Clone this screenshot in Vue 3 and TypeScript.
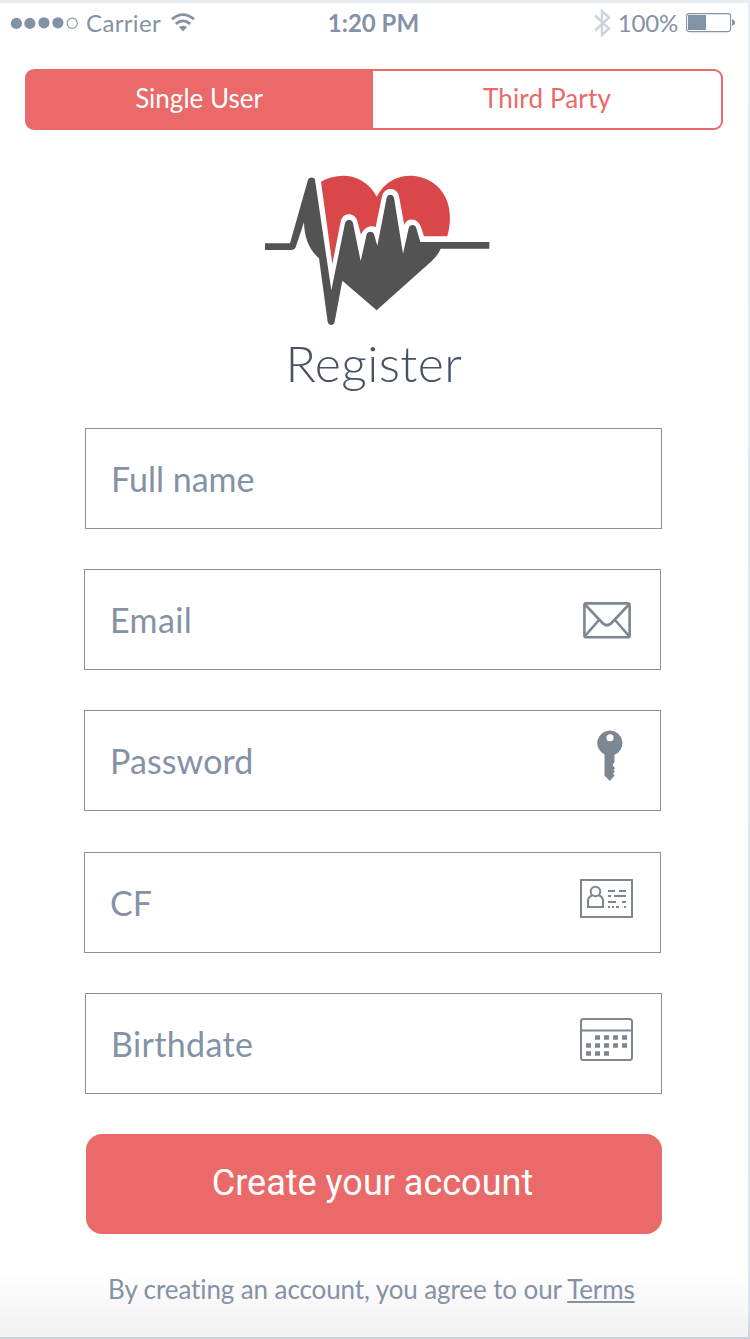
<script setup lang="ts">
import { ref } from 'vue'

interface Field {
  id: string
  label: string
  icon?: 'mail' | 'key' | 'card' | 'calendar'
}

const tabs: string[] = ['Single User', 'Third Party']
const activeTab = ref<number>(0)

const fields: Field[] = [
  { id: 'name', label: 'Full name' },
  { id: 'email', label: 'Email', icon: 'mail' },
  { id: 'password', label: 'Password', icon: 'key' },
  { id: 'cf', label: 'CF', icon: 'card' },
  { id: 'birth', label: 'Birthdate', icon: 'calendar' },
]
</script>

<template>
  <div class="backdrop">
    <main class="screen">
      <header class="status">
        <div class="status-left">
          <svg class="signal" width="68" height="12" viewBox="0 0 68 12">
            <circle cx="5.4" cy="6.4" r="5.6" />
            <circle cx="18.9" cy="6.4" r="5.6" />
            <circle cx="32.9" cy="5.8" r="5.6" />
            <circle cx="46.9" cy="5.8" r="5.6" />
            <circle class="empty" cx="61.2" cy="6.2" r="5.1" />
          </svg>
          <span class="carrier">Carrier</span>
          <svg class="wifi" width="24" height="19" viewBox="0 0 24 19">
            <path d="M1 6.2Q12 -3 23 6.2" />
            <path d="M4.8 10.8Q12 5 19.2 10.8" />
            <path class="solid" d="M8 14Q12 11.4 16 14L12 18.6Z" />
          </svg>
        </div>
        <span class="clock">1:20 PM</span>
        <div class="status-right">
          <svg class="bluetooth" width="17" height="28" viewBox="0 0 17 28">
            <path d="M1 6.5L15 19.5L8 26V2L15 8.5L1 21.5" />
          </svg>
          <span class="percent">100%</span>
          <svg class="battery" width="50" height="20" viewBox="0 0 50 20">
            <rect class="shell" x="0.6" y="0.6" width="44" height="18" rx="2.5" />
            <rect x="2" y="2" width="18" height="15" />
            <path d="M46 6.2Q49 7 49 9.5T46 12.8Z" />
          </svg>
        </div>
      </header>

      <nav class="tabs">
        <button
          v-for="(tab, i) in tabs"
          :key="tab"
          type="button"
          class="tab"
          :class="{ active: i === activeTab }"
          @click="activeTab = i"
        >{{ tab }}</button>
      </nav>

      <svg class="logo" width="245" height="170" viewBox="0 0 735 510">
        <path
          class="heart"
          d="M198 50C258 16 332 30 365 95C402 24 480 18 532 52C580 84 596 144 577 214H507L499 190C491 158 456 156 448 180L432 94C426 65 388 65 381 94L362 186C347 180 328 186 318 209L307 168C300 140 262 141 257 170L232 297Z"
        />
        <path
          class="pulse"
          d="M30 235H105L159 44C163 35 177 35 180 44L229 376L270 175C274 161 291 161 294 175L317 288L335 208C339 198 353 198 357 208L367 242L395 98C398 86 414 86 417 98L444 266L461 190C465 177 480 177 484 190L496 231H703V251H557C549 272 530 290 500 315L365 436L262 347L239 470C236 483 221 483 218 470L192 280C160 252 148 215 147 172L122 247Q119 255 110 255H30Z"
        />
      </svg>

      <h1 class="title">Register</h1>

      <form class="form" @submit.prevent>
        <div v-for="f in fields" :key="f.id" class="field" :class="f.id">
          <span class="label">{{ f.label }}</span>
          <svg v-if="f.icon === 'mail'" class="icon" width="48" height="37" viewBox="0 0 48 37">
            <rect x="1.4" y="1.4" width="45.2" height="33.8" rx="1.8" />
            <path d="M2 2.5L19.5 21Q24 25.5 28.5 21L46 2.5M2 34L16 18M46 34L32 18" />
          </svg>
          <svg v-else-if="f.icon === 'key'" class="icon key" width="26" height="52" viewBox="0 0 26 52">
            <path
              fill-rule="evenodd"
              d="M13 0.5A12.6 12.6 0 0 1 17.5 24.8V32L16 34V36L18 38L16.5 40L18 41.5L16 43.5L17.5 45.5L13 51L7.5 45.5V24.5A12.6 12.6 0 0 1 13 0.5ZM13 4.2A3.5 3.5 0 1 0 13 11.2A3.5 3.5 0 1 0 13 4.2Z"
            />
          </svg>
          <svg v-else-if="f.icon === 'card'" class="icon" width="53" height="39" viewBox="0 0 53 39">
            <rect class="thin" x="1" y="1" width="51" height="37" />
            <circle class="thin" cx="15.5" cy="12.5" r="4.8" />
            <path
              class="thin"
              d="M12 16.5Q8 18 8 22V28H23V22Q23 18 19 16.5M28 12H35M39 12H46M28 17H31M34 17H46M28 23H36M42 23H46M28 28H30M32 28H34M36 28H39M44 28H46"
            />
          </svg>
          <svg v-else-if="f.icon === 'calendar'" class="icon" width="53" height="43" viewBox="0 0 53 43">
            <rect class="thin" x="1" y="1" width="51" height="41" rx="2.5" />
            <path class="thin" d="M1 12.5H52" />
            <path
              class="days"
              d="M15 19.5H20M24 19.5H29M33 19.5H38M42 19.5H47M6 27.5H11M15 27.5H20M24 27.5H29M33 27.5H38M42 27.5H47M6 35.5H11M15 35.5H20M24 35.5H29"
            />
          </svg>
        </div>
        <button class="submit" type="submit">Create your account</button>
      </form>

      <footer class="legal">
        <p>By creating an account, you agree to our <a>Terms</a></p>
      </footer>
    </main>
  </div>
</template>

<style>
body {
  margin: 0;
}
</style>

<style scoped>
.backdrop {
  box-sizing: border-box;
  width: 750px;
  height: 1339px;
  padding: 3px 2px 2px 0;
  overflow: hidden;
  background: linear-gradient(#e9eef4, #dfe4ed 98%, #cbd1dc 99.8%);
  font-family: Lato, 'Liberation Sans', sans-serif;
  font-variant-ligatures: none;
  color: #8492a6;
}
.screen {
  display: flex;
  flex-direction: column;
  height: 1334px;
  background: #fff;
}
.status {
  display: grid;
  grid-template-columns: 1fr auto 1fr;
  align-items: center;
  height: 39px;
  padding: 0 12px 0 11px;
  font-size: 24px;
  line-height: 38px;
  white-space: nowrap;
}
.status-left,
.status-right {
  display: flex;
  align-items: center;
}
.status-right {
  justify-content: flex-end;
}
.signal,
.battery,
.wifi {
  fill: #8492a6;
}
.empty,
.shell {
  fill: none;
  stroke: #8492a6;
  stroke-width: 1.1;
}
.carrier {
  margin: 0 10px 0 7px;
  letter-spacing: 0.35px;
}
.wifi path {
  fill: none;
  stroke: #8492a6;
  stroke-width: 2.8;
}
.wifi .solid {
  fill: #8492a6;
  stroke: none;
}
.clock {
  font-weight: 700;
}
.bluetooth {
  margin-right: 7px;
  fill: none;
  stroke: #ced3da;
  stroke-width: 2.4;
}
.percent {
  margin-right: 8px;
  letter-spacing: -0.2px;
}
.tabs {
  display: grid;
  grid-template-columns: 348px 350px;
  width: 698px;
  height: 61px;
  margin: 27px 0 0 25px;
}
.tab {
  box-sizing: border-box;
  padding: 0 0 3px;
  border: 2px solid #e96a68;
  background: #fff;
  color: #e96a68;
  font: 26px/54px Lato, sans-serif;
}
.tab:first-child {
  border-radius: 9px 0 0 9px;
}
.tab:last-child {
  border-left: 0;
  border-radius: 0 9px 9px 0;
  letter-spacing: 0.15px;
}
.tab.active {
  background: #e96a68;
  color: #fff;
}
.logo {
  margin: 35px 0 0 255px;
}
.title {
  margin: -2px 0 0;
  height: 95px;
  font-size: 50px;
  font-weight: 300;
  line-height: 60px;
  letter-spacing: 0.4px;
  text-align: center;
  color: #475364;
}
.heart {
  fill: #da4749;
}
.pulse {
  fill: #535353;
}
.form {
  display: flex;
  flex-direction: column;
  gap: 40px;
  width: 577px;
  margin-left: 84px;
}
.field {
  display: flex;
  box-sizing: border-box;
  align-items: center;
  justify-content: space-between;
  width: 577px;
  height: 101px;
  padding: 0 27px 0 25px;
  border: 1px solid #8492a6;
}
.name,
.birth {
  margin-left: 1px;
}
.birth {
  padding-right: 28px;
  letter-spacing: 0.35px;
}
.cf {
  margin-top: 1px;
}
.email {
  padding-right: 29px;
  letter-spacing: 0.4px;
}
.email .icon {
  margin-top: 2px;
}
.password {
  padding-right: 37px;
  letter-spacing: 0.1px;
}
.password .icon {
  margin-bottom: 10px;
}
.cf .icon,
.birth .icon {
  margin-bottom: 8px;
}
.label {
  padding-top: 1px;
  font-size: 34px;
  line-height: 42px;
}
.icon {
  fill: none;
  stroke: #7c8791;
  stroke-width: 2.6;
}
.icon.key {
  fill: #7c8791;
  stroke: none;
}
.icon .thin {
  stroke-width: 2;
}
.icon .days {
  stroke-width: 4.5;
}
.submit {
  width: 576px;
  height: 100px;
  margin-left: 2px;
  padding: 0 3px 2px 0;
  border: 0;
  border-radius: 16px;
  background: #e96a68;
  color: #fff;
  font: 36px/42px Roboto, sans-serif;
}
.legal {
  flex: 1;
  margin-top: 38px;
  background: linear-gradient(#fff, #f1f1f1);
}
.legal p {
  margin: 0 0 0 108px;
  font-size: 26px;
  line-height: 34px;
  letter-spacing: -0.1px;
  white-space: nowrap;
}
.legal a {
  text-decoration: underline;
  text-decoration-thickness: 2px;
  text-underline-offset: 2px;
}
</style>
